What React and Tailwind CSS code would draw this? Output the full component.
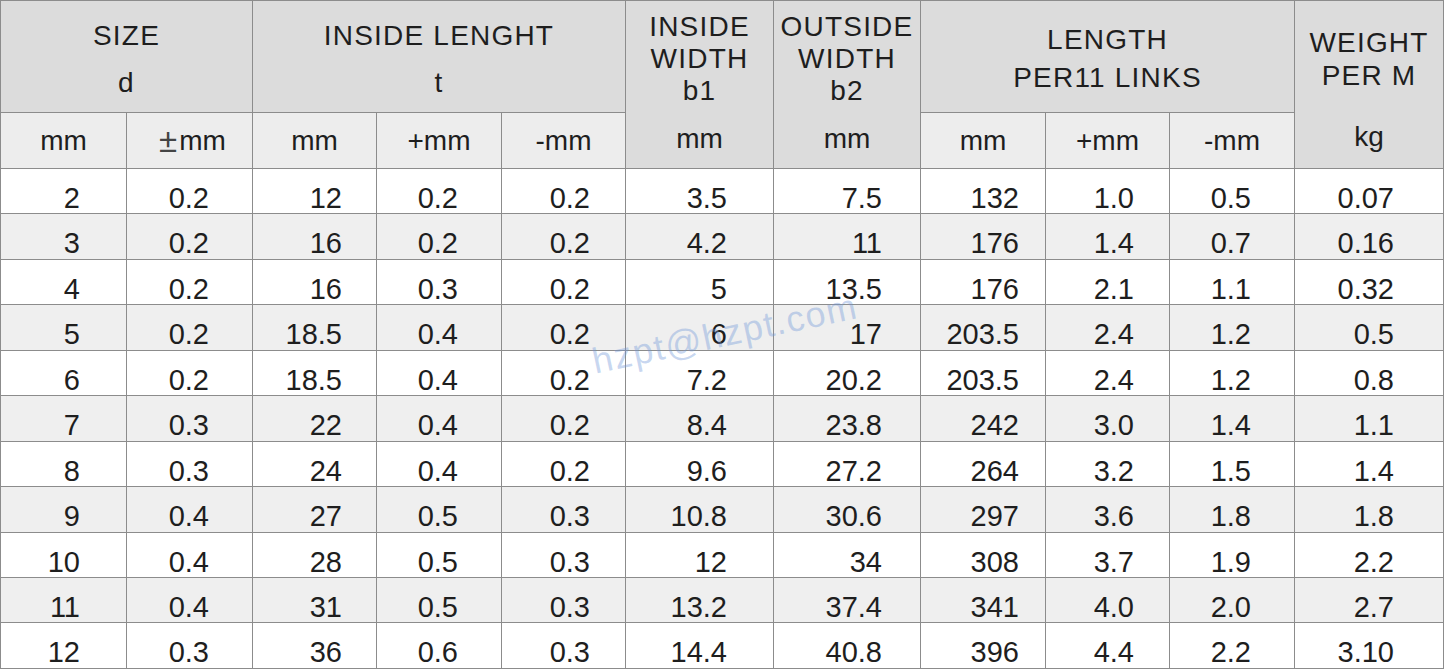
import React from "react";

const rows = [
    ["2", "0.2", "12", "0.2", "0.2", "3.5", "7.5", "132", "1.0", "0.5", "0.07"],
    ["3", "0.2", "16", "0.2", "0.2", "4.2", "11", "176", "1.4", "0.7", "0.16"],
    ["4", "0.2", "16", "0.3", "0.2", "5", "13.5", "176", "2.1", "1.1", "0.32"],
    ["5", "0.2", "18.5", "0.4", "0.2", "6", "17", "203.5", "2.4", "1.2", "0.5"],
    ["6", "0.2", "18.5", "0.4", "0.2", "7.2", "20.2", "203.5", "2.4", "1.2", "0.8"],
    ["7", "0.3", "22", "0.4", "0.2", "8.4", "23.8", "242", "3.0", "1.4", "1.1"],
    ["8", "0.3", "24", "0.4", "0.2", "9.6", "27.2", "264", "3.2", "1.5", "1.4"],
    ["9", "0.4", "27", "0.5", "0.3", "10.8", "30.6", "297", "3.6", "1.8", "1.8"],
    ["10", "0.4", "28", "0.5", "0.3", "12", "34", "308", "3.7", "1.9", "2.2"],
    ["11", "0.4", "31", "0.5", "0.3", "13.2", "37.4", "341", "4.0", "2.0", "2.7"],
    ["12", "0.3", "36", "0.6", "0.3", "14.4", "40.8", "396", "4.4", "2.2", "3.10"],
];

// right padding per column, numbers sit right-aligned in the reference
const pad = [
    "pr-[46px]",
    "pr-[43px]",
    "pr-[34px]",
    "pr-[43px]",
    "pr-[35px]",
    "pr-[46px]",
    "pr-[38px]",
    "pr-[26px]",
    "pr-[35px]",
    "pr-[43px]",
    "pr-[49px]",
];

const cell = "border-r border-b border-[#8c8c8c]";

const Head = ({ className, children }) => (
    <div className={`${cell} bg-[#dcdcdc] flex flex-col items-center tracking-[1.2px] ${className}`}>
        {children}
    </div>
);

const Sub = ({ children }) => (
    <div className={`${cell} bg-[#ededed] flex items-center justify-center leading-[32px]`}>
        {children}
    </div>
);

const ChainTable = () => {
    return (
        <div className="relative w-[1444px] h-[669px] bg-white border-l border-t border-[#8c8c8c] font-['Liberation_Sans',Arial,sans-serif] text-[28px] text-[#1e1e1e] overflow-hidden">
            <div className="grid grid-cols-[126px_126px_124px_125px_124px_148px_147px_125px_124px_125px_149px] grid-rows-[112px_56px_repeat(11,45.45px)]">
                <Head className="col-span-2 pt-[11px] leading-[47px]">
                    <span>SIZE</span>
                    <span>d</span>
                </Head>
                <Head className="col-span-3 pt-[11px] leading-[47px]">
                    <span>INSIDE LENGHT</span>
                    <span>t</span>
                </Head>
                <Head className="row-span-2 pt-[10px] leading-[32px]">
                    <span>INSIDE</span>
                    <span>WIDTH</span>
                    <span>b1</span>
                    <span className="mt-[16px] tracking-normal">mm</span>
                </Head>
                <Head className="row-span-2 pt-[10px] leading-[32px]">
                    <span>OUTSIDE</span>
                    <span>WIDTH</span>
                    <span>b2</span>
                    <span className="mt-[16px] tracking-normal">mm</span>
                </Head>
                <Head className="col-span-3 pt-[20px] leading-[38px]">
                    <span>LENGTH</span>
                    <span>PER11 LINKS</span>
                </Head>
                <Head className="row-span-2 pt-[25px] leading-[33px]">
                    <span>WEIGHT</span>
                    <span>PER M</span>
                    <span className="mt-[29px] leading-[32px] tracking-normal">kg</span>
                </Head>

                <Sub>mm</Sub>
                <Sub>
                    <span className="text-[33px] text-[#444] font-light mr-[2px] pl-[6px]">±</span>mm
                </Sub>
                <Sub>mm</Sub>
                <Sub>+mm</Sub>
                <Sub>-mm</Sub>
                <Sub>mm</Sub>
                <Sub>+mm</Sub>
                <Sub>-mm</Sub>

                {rows.map((row, i) =>
                    row.map((val, j) => (
                        <div
                            key={`${i}-${j}`}
                            className={`${cell} ${i % 2 === 1 ? "bg-[#efefef]" : "bg-white"} text-right text-[29px] pt-[17px] leading-[24px] ${pad[j]}`}
                        >
                            {val}
                        </div>
                    ))
                )}
            </div>

            <div className="absolute left-[724px] top-[333px] -translate-x-1/2 -translate-y-1/2 -rotate-12 text-[36px] tracking-[1.5px] text-[rgba(110,150,215,0.38)] whitespace-nowrap pointer-events-none">
                hzpt@hzpt.com
            </div>
        </div>
    );
};

export default function App() {
    return <ChainTable />;
}
